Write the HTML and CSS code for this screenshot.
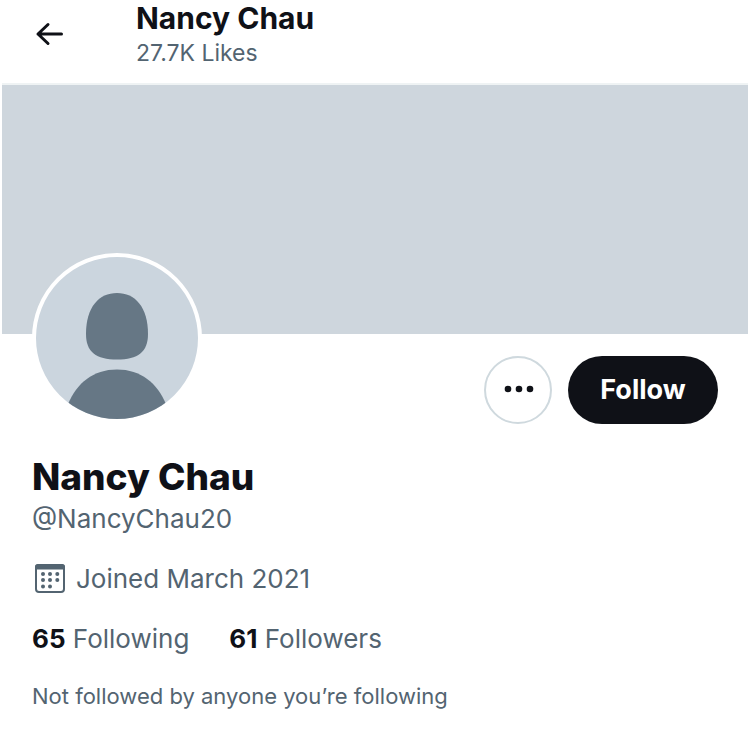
FILE: index.html
```html
<!DOCTYPE html>
<html lang="en">
<head>
<meta charset="utf-8">
<meta name="viewport" content="width=device-width, initial-scale=1">
<title>Nancy Chau</title>
<link rel="stylesheet" href="styles.css">
</head>
<body>
<main class="column">
  <header class="topbar">
    <button class="back" type="button" aria-label="Back">
      <svg viewBox="0 0 40 40" fill="none" stroke="currentColor" stroke-width="3" stroke-linecap="round" stroke-linejoin="round" aria-hidden="true"><path d="M31.500 20H8M18 10.500L8 20L18 29.500"/></svg>
    </button>
    <div class="topbar-text">
      <h2 class="topbar-title">Nancy Chau</h2>
      <p class="topbar-count">27.7K Likes</p>
    </div>
  </header>
  <div class="banner"></div>
  <section class="profile">
    <div class="profile-top">
      <a class="avatar" href="#" aria-label="Profile photo">
        <svg viewBox="0 0 162 162" aria-hidden="true">
          <path fill="#667785" d="M81 36C99 36 112 50 112 77C112 95 102 102.500 81 102.500C60 102.500 50 95 50 77C50 50 63 36 81 36Z"/>
          <path fill="#667785" d="M81 112.500C105 112.500 121 126 130 147V162H32V147C41 126 57 112.500 81 112.500Z"/>
        </svg>
      </a>
      <div class="actions">
        <button class="more" type="button" aria-label="More">
          <svg viewBox="0 0 40 40" fill="currentColor" aria-hidden="true"><circle cx="10" cy="19" r="3.300"/><circle cx="21" cy="19" r="3.300"/><circle cx="32" cy="19" r="3.300"/></svg>
        </button>
        <button class="follow" type="button">Follow</button>
      </div>
    </div>
    <h1 class="name">Nancy Chau</h1>
    <p class="handle">@NancyChau20</p>
    <p class="joined">
      <svg viewBox="0 0 36 36" aria-hidden="true">
        <rect x="4" y="4" width="28" height="27" rx="3" fill="none" stroke="currentColor" stroke-width="2"/>
        <path fill="currentColor" d="M3 8.500V5.500Q3 3 6 3H30Q33 3 33 5.500V8.500Z"/>
        <g fill="currentColor"><circle cx="11" cy="13" r="2"/><circle cx="18" cy="13" r="2"/><circle cx="25.300" cy="13" r="2"/><circle cx="11" cy="19" r="2"/><circle cx="18" cy="19" r="2"/><circle cx="25.300" cy="19" r="2"/><circle cx="11" cy="25.500" r="2"/><circle cx="18" cy="25.500" r="2"/></g>
      </svg>
      <span>Joined March 2021</span>
    </p>
    <div class="stats">
      <a class="stat" href="#"><strong>65</strong> Following</a>
      <a class="stat" href="#"><strong>61</strong> Followers</a>
    </div>
    <p class="note">Not followed by anyone you’re following</p>
  </section>
</main>
</body>
</html>
```
FILE: styles.css
```css
* {
  box-sizing: border-box;
}

body {
  margin: 0;
  background: #fff;
  color: #0f1117;
  font-family: Inter, "Liberation Sans", sans-serif;
  font-size: 26px;
  line-height: 40px;
}

h1, h2, p {
  margin: 0;
}

button {
  padding: 0;
  border: 0;
  background: none;
  color: inherit;
  font: inherit;
  cursor: pointer;
}

a {
  color: inherit;
  text-decoration: none;
}

svg {
  display: block;
}

.column {
  padding: 0 2px;
}

.topbar {
  display: flex;
  align-items: flex-start;
  gap: 68px;
  padding: 0 28px 13px;
  border-bottom: 2px solid #eff3f4;
}

.back {
  width: 38px;
  height: 68px;
  display: flex;
  align-items: center;
}

.back svg {
  width: 40px;
  flex: none;
}

.topbar-title {
  font-size: 30px;
  font-weight: 700;
  line-height: 36px;
}

.topbar-count {
  color: #536471;
  font-size: 23px;
  line-height: 34px;
}

.banner {
  height: 249px;
  background: #ced6dd;
}

.profile {
  padding: 0 30px 24px;
}

.profile-top {
  display: flex;
  justify-content: space-between;
  align-items: flex-start;
  margin-top: -81px;
}

.avatar {
  width: 170px;
  height: 170px;
  border: 4px solid #fff;
  border-radius: 50%;
  overflow: hidden;
  background: #cbd5de;
}

.actions {
  display: flex;
  gap: 16px;
  padding-top: 103px;
}

.more {
  width: 68px;
  height: 68px;
  display: grid;
  place-items: center;
  border: 2px solid #cfd9de;
  border-radius: 50%;
}

.more svg {
  width: 40px;
}

.follow {
  min-width: 150px;
  height: 68px;
  padding: 0 30px;
  border-radius: 34px;
  background: #0f1117;
  color: #fff;
  font-size: 27px;
  font-weight: 700;
}

.name {
  margin-top: 31px;
  font-size: 37px;
  font-weight: 800;
  line-height: 44px;
}

.handle {
  color: #536471;
}

.joined {
  display: flex;
  align-items: center;
  gap: 8px;
  margin-top: 20px;
  color: #536471;
}

.joined svg {
  width: 36px;
}

.stats {
  display: flex;
  gap: 40px;
  margin-top: 20px;
}

.stat {
  color: #536471;
}

.stat strong {
  color: #0f1117;
  font-weight: 700;
}

.note {
  margin-top: 20px;
  color: #536471;
  font-size: 22px;
  line-height: 34px;
}
```
